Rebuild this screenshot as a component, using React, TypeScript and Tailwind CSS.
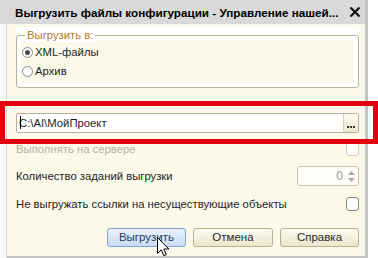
import React from "react";

function Radio({ checked }: { checked?: boolean }) {
  return (
    <span className="w-[11px] h-[11px] rounded-full border border-[#8c8c8c] bg-white flex items-center justify-center shrink-0">
      {checked && <span className="w-[5px] h-[5px] rounded-full bg-[#4a4a4a]" />}
    </span>
  );
}

function Checkbox({ disabled }: { disabled?: boolean }) {
  return (
    <span
      className={
        "w-[13px] h-[14px] rounded-[3px] border bg-white shrink-0 " +
        (disabled ? "border-[#d2cdb8]" : "border-[#8d8a7a]")
      }
    />
  );
}

function Cursor() {
  return (
    <svg width="13" height="20" viewBox="0 0 13 20" className="absolute left-[157px] top-[237px]">
      <path
        d="M0.5 0.5 L0.5 16.5 L4.3 12.8 L6.8 18.7 L9.3 17.6 L6.9 12 L11.8 12 Z"
        fill="#fff"
        stroke="#000"
        strokeWidth="1"
        strokeLinejoin="miter"
      />
    </svg>
  );
}

export default function App() {
  return (
    <div
      className="relative w-[378px] h-[258px] bg-white overflow-hidden text-[11.3px] text-[#1e1e1e]"
      style={{ fontFamily: '"Liberation Sans", Arial, sans-serif' }}
    >
      <div className="w-[368px] h-[258px] flex flex-col">
        {/* title bar */}
        <div className="h-[24px] bg-[#d9d9d9] border-r-[3px] border-[#c4c4c4] flex items-center pl-[15px] pr-[4px] shrink-0">
          <span className="font-bold text-[11.7px] text-black whitespace-nowrap flex-1 leading-none pt-[1px]">
            Выгрузить файлы конфигурации - Управление нашей...
          </span>
          <svg width="12" height="12" viewBox="0 0 12 12" className="shrink-0">
            <path d="M1.5 1.5 L10.5 10.5 M10.5 1.5 L1.5 10.5" stroke="#111" strokeWidth="2.2" />
          </svg>
        </div>
        {/* body */}
        <div className="flex-1 flex bg-[#f3f3f3]">
          <div className="w-[7px] border-r border-[#d8d8d8] bg-[#f7f7f7]" />
          <div className="flex-1 bg-[#fbf9ea] flex flex-col pl-[9px] pr-[6px] border-r-[3px] border-b-[2px] border-[#c4c4c4]">
            {/* group */}
            <div className="mt-[3px] h-[61px] bg-white pt-[8px] flex flex-col">
              <div className="relative flex-1 border border-[#b6b198] rounded-[3px] p-[4px] flex">
                <span className="absolute left-[8px] top-[-8px] bg-white px-[2px] text-[#b27a1e] leading-[14px]">
                  Выгрузить в:
                </span>
                <div className="flex-1 bg-[#fbf9ea] flex flex-col justify-center gap-[5px] pl-[1px] pt-[1px]">
                  <div className="flex items-center gap-[2px] h-[14px]">
                    <Radio checked />
                    <span>XML-файлы</span>
                  </div>
                  <div className="flex items-center gap-[2px] h-[14px]">
                    <Radio />
                    <span>Архив</span>
                  </div>
                </div>
              </div>
            </div>
            {/* path input */}
            <div className="mt-[25px] h-[20px] border border-[#b6b198] rounded-[2px] bg-white flex">
              <div className="flex-1 flex items-center pl-[2px] relative">
                <span className="relative">
                  C:\AI\МойПроект
                  <span className="absolute left-[1px] top-[1px] w-[1px] h-[13px] bg-black" />
                </span>
              </div>
              <div className="w-[15px] border-l border-[#d6d1b8] bg-gradient-to-b from-[#fdfcf4] to-[#ece7cf] flex items-end justify-center pb-[4px]">
                <span className="flex gap-[1px]">
                  <span className="w-[2px] h-[2px] bg-[#333]" />
                  <span className="w-[2px] h-[2px] bg-[#333]" />
                  <span className="w-[2px] h-[2px] bg-[#333]" />
                </span>
              </div>
            </div>
            {/* disabled row */}
            <div className="mt-[9px] h-[14px] flex items-center justify-between">
              <span className="text-[#b8b19b]">Выполнять на сервере</span>
              <Checkbox disabled />
            </div>
            {/* count row */}
            <div className="mt-[10px] h-[20px] flex items-center justify-between">
              <span>Количество заданий выгрузки</span>
              <div className="w-[62px] h-[20px] border border-[#c8c3ab] rounded-[3px] bg-[#fefdf7] flex">
                <span className="flex-1 text-right pr-[2px] text-[#9a9a9a] leading-[18px] text-[12px]">0</span>
                <div className="w-[13px] flex flex-col items-center justify-center gap-[3px]">
                  <svg width="7" height="4" viewBox="0 0 7 4">
                    <path d="M0 4 L3.5 0 L7 4 Z" fill="#a9a9a9" />
                  </svg>
                  <svg width="7" height="4" viewBox="0 0 7 4">
                    <path d="M0 0 L3.5 4 L7 0 Z" fill="#a9a9a9" />
                  </svg>
                </div>
              </div>
            </div>
            {/* no links row */}
            <div className="mt-[11px] h-[14px] flex items-center justify-between">
              <span>Не выгружать ссылки на несуществующие объекты</span>
              <Checkbox />
            </div>
            {/* buttons */}
            <div className="mt-[17px] flex justify-end gap-[7px]">
              <button className="w-[79px] h-[19px] rounded-[3px] border border-[#7fa5d4] bg-gradient-to-b from-[#eaf2fc] to-[#cadcf3] text-[#28395a] text-[11.5px] leading-none">
                Выгрузить
              </button>
              <button className="w-[80px] h-[19px] rounded-[3px] border border-[#b9b290] bg-gradient-to-b from-[#fdfcf3] to-[#ebe5ca] text-[#2a2a2a] text-[11.5px] leading-none">
                Отмена
              </button>
              <button className="w-[79px] h-[19px] rounded-[3px] border border-[#b9b290] bg-gradient-to-b from-[#fdfcf3] to-[#ebe5ca] text-[#2a2a2a] text-[11.5px] leading-none">
                Справка
              </button>
            </div>
          </div>
        </div>
      </div>
      {/* red annotation box */}
      <div className="absolute left-0 top-[101px] w-[378px] h-[43px] border-[5px] border-[#e4000f]" />
      <Cursor />
    </div>
  );
}
